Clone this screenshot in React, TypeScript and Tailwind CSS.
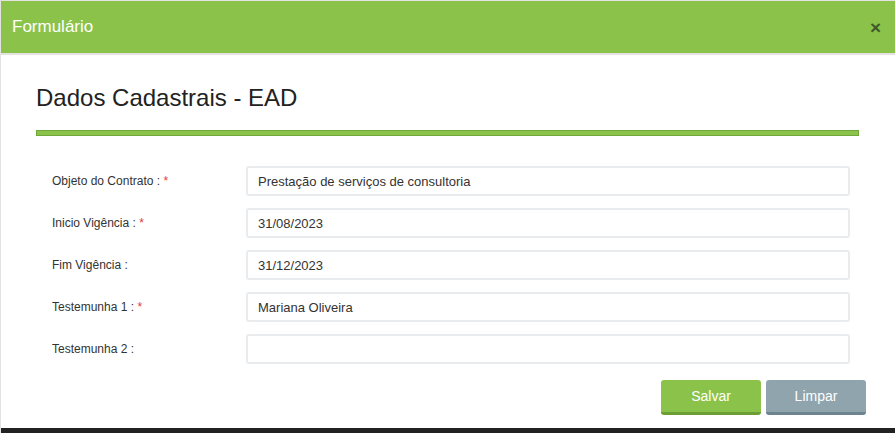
import { useState } from "react";

type Field = {
  label: string;
  value: string;
  required?: boolean;
};

const fields: Field[] = [
  { label: "Objeto do Contrato :", value: "Prestação de serviços de consultoria", required: true },
  { label: "Inicio Vigência :", value: "31/08/2023", required: true },
  { label: "Fim Vigência :", value: "31/12/2023" },
  { label: "Testemunha 1 :", value: "Mariana Oliveira", required: true },
  { label: "Testemunha 2 :", value: "" },
];

const App = () => {
  const [values, setValues] = useState(fields.map((f) => f.value));

  return (
    <div className="w-[895px] h-[433px] bg-white font-['Liberation_Sans',Arial,sans-serif] flex flex-col border-l border-t border-[#e3e3e3]">
      {/* Header */}
      <div className="h-[54px] bg-[#8bc34a] border-b-2 border-[#e2e2e2] flex items-center justify-between pl-[11px] pr-[14px] shrink-0">
        <span className="text-white text-[17px]">Formulário</span>
        <span className="text-[#3f5a2a] text-[19px] font-bold leading-none">×</span>
      </div>

      {/* Body */}
      <div className="flex-1 px-[35px] pt-[31px]">
        <h1 className="text-[24px] text-[#222] leading-none">Dados Cadastrais - EAD</h1>
        <div className="mt-[20px] h-[6px] mr-[1px] bg-[#8bc34a] border border-[#6ea83a]" />

        <div className="mt-[30px] pl-[16px] pr-[10px] flex flex-col gap-[12px]">
          {fields.map((f, i) => (
            <div key={f.label} className="flex items-center">
              <label className="w-[194px] text-[12px] text-[#333]">
                {f.label} {f.required && <span className="text-[#e53935]">*</span>}
              </label>
              <input
                value={values[i]}
                onChange={(e) => setValues(values.map((v, j) => (j === i ? e.target.value : v)))}
                className="flex-1 h-[30px] border-2 border-[#e8ecef] rounded-[3px] px-[10px] text-[13px] text-[#333] outline-none"
              />
            </div>
          ))}
        </div>

        <div className="mt-[16px] flex justify-end gap-[5px] mr-[-6px]">
          <button className="w-[100px] h-[35px] bg-[#8bc34a] border-b-[3px] border-[#6b9f35] rounded-[3px] text-white text-[14px]">
            Salvar
          </button>
          <button className="w-[100px] h-[35px] bg-[#90a4ae] border-b-[3px] border-[#6d838e] rounded-[3px] text-white text-[14px]">
            Limpar
          </button>
        </div>
      </div>

      {/* Footer bar */}
      <div className="h-[5px] bg-[#222] shrink-0" />
    </div>
  );
};

export default App;
